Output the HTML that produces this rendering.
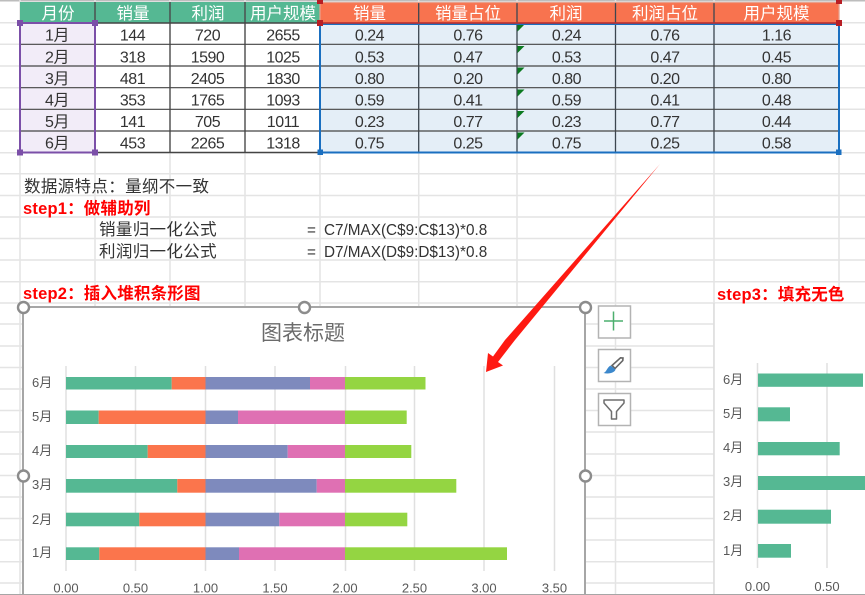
<!DOCTYPE html>
<html><head><meta charset="utf-8"><style>
html,body{margin:0;padding:0;background:#fff;width:865px;height:595px;overflow:hidden}
svg{display:block}
text{font-family:"Liberation Sans","Noto Sans CJK SC",sans-serif}
.c{text-anchor:middle;font-size:16px;letter-spacing:-.5px;fill:#333}
.h{text-anchor:middle;font-size:16.5px;fill:#fff}
.g{stroke:#e4e4e4;stroke-width:1.5;fill:none}
.t{font-size:16.5px;fill:#333;letter-spacing:.35px}
.n{font-size:15.3px;fill:#333}
.r{font-size:16.5px;fill:#f00;font-weight:bold;letter-spacing:.2px}
.l{font-size:13px;fill:#595959}
.x{font-size:13px;fill:#595959;text-anchor:middle}
.cg{stroke:#e0e0e0;stroke-width:1.5}
.d{stroke:#444;stroke-width:1.2}
.b{fill:#fff;stroke:#b3b3b3;stroke-width:1.5}
.o{fill:#fff;stroke:#8c8c8c;stroke-width:2.4}
</style></head><body>
<svg width="865" height="595" viewBox="0 0 865 595" xmlns="http://www.w3.org/2000/svg">
<rect width="865" height="595" fill="#fff"/>
<rect x="0" y="0" width="865" height="1.5" fill="#bdbdbd"/>
<path class="g" d="M0 22.7H865M0 44.3H865M0 66H865M0 87.7H865M0 109.3H865M0 131H865M0 152.7H865M0 173.7H865M0 195.5H865M0 217H865M0 238.5H865M0 260H865M0 281.7H865M0 303H865M0 324H865M0 346H865M0 367.5H865M0 389H865M0 410.5H865M0 432H865M0 454H865M0 475.5H865M0 497H865M0 518.5H865M0 540H865M0 561.7H865M0 583H865"/>
<path class="g" d="M20 0V595M95 0V595M170 0V595M245 0V595M320 0V595M418.7 0V595M517 0V595M615.5 0V595M714 0V595M839 0V303"/>

<!-- table fills -->
<rect x="20" y="2" width="300" height="20.5" fill="#55b893"/>
<rect x="320" y="2" width="519" height="21" fill="#f8734f"/>
<rect x="20" y="23" width="75" height="129" fill="#f2ecf8"/>
<rect x="95" y="23" width="225" height="129" fill="#fff"/>
<rect x="320" y="23" width="519" height="129" fill="#e4eef7"/>
<!-- table lines -->
<path d="M95 2V152M170 2V152M245 2V152" stroke="#4a4a4a" stroke-width="1.4" fill="none"/>
<path d="M418.7 2V152M517 2V152M615.5 2V152M714 2V152" stroke="#3c4650" stroke-width="1.3" fill="none"/>
<path class="d" d="M20 44.3H839M20 66H839M20 87.7H839M20 109.3H839M20 131H839"/>
<path d="M95 23H320M95 152.5H320" stroke="#444" stroke-width="1.4"/>
<!-- green triangles -->
<path fill="#0b7a20" d="M517.5 24.5h7l-7 7zM517.5 46h7l-7 7zM517.5 67.5h7l-7 7zM517.5 89.5h7l-7 7zM517.5 111h7l-7 7zM517.5 132.5h7l-7 7z"/>
<!-- selections -->
<rect x="20" y="23" width="75" height="129.5" fill="none" stroke="#7b4fa8" stroke-width="2"/>
<rect x="320" y="24" width="519" height="128.5" fill="none" stroke="#1a6fc0" stroke-width="2"/>
<rect x="320" y="2.5" width="519" height="20.5" fill="none" stroke="#e9a08c" stroke-width="1.2"/>
<path d="M320 23H839" stroke="#b8282a" stroke-width="1.5"/>
<path fill="#7b4fa8" d="M17 20h6v6h-6zM92 20h6v6h-6zM17 149.500h6v6h-6zM92 149.500h6v6h-6z"/>
<path fill="#b81e24" d="M317 0h6v4h-6zM317 20h6v6h-6zM836 0h6v4h-6zM836 20h6v6h-6z"/>
<path fill="#1a6fc0" d="M317.500 149.500h5.500v5.500h-5.500zM836 149.500h5.500v5.500h-5.500z"/>

<!-- headers -->
<text class="h" x="58" y="19">月份</text><text class="h" x="133" y="19">销量</text><text class="h" x="208" y="19">利润</text><text class="h" x="283" y="19">用户规模</text>
<text class="h" x="369.500" y="19">销量</text><text class="h" x="468" y="19">销量占位</text><text class="h" x="566" y="19">利润</text><text class="h" x="665" y="19">利润占位</text><text class="h" x="776.500" y="19">用户规模</text>

<!-- rows -->
<g>
<text class="c" x="57" y="40.500">1月</text><text class="c" x="132.500" y="40.500">144</text><text class="c" x="207.500" y="40.500">720</text><text class="c" x="283" y="40.500">2655</text><text class="c" x="369.500" y="40.500">0.24</text><text class="c" x="468" y="40.500">0.76</text><text class="c" x="566.500" y="40.500">0.24</text><text class="c" x="665" y="40.500">0.76</text><text class="c" x="776.500" y="40.500">1.16</text>
<text class="c" x="57" y="62.500">2月</text><text class="c" x="132.500" y="62.500">318</text><text class="c" x="207.500" y="62.500">1590</text><text class="c" x="283" y="62.500">1025</text><text class="c" x="369.500" y="62.500">0.53</text><text class="c" x="468" y="62.500">0.47</text><text class="c" x="566.500" y="62.500">0.53</text><text class="c" x="665" y="62.500">0.47</text><text class="c" x="776.500" y="62.500">0.45</text>
<text class="c" x="57" y="84">3月</text><text class="c" x="132.500" y="84">481</text><text class="c" x="207.500" y="84">2405</text><text class="c" x="283" y="84">1830</text><text class="c" x="369.500" y="84">0.80</text><text class="c" x="468" y="84">0.20</text><text class="c" x="566.500" y="84">0.80</text><text class="c" x="665" y="84">0.20</text><text class="c" x="776.500" y="84">0.80</text>
<text class="c" x="57" y="105.500">4月</text><text class="c" x="132.500" y="105.500">353</text><text class="c" x="207.500" y="105.500">1765</text><text class="c" x="283" y="105.500">1093</text><text class="c" x="369.500" y="105.500">0.59</text><text class="c" x="468" y="105.500">0.41</text><text class="c" x="566.500" y="105.500">0.59</text><text class="c" x="665" y="105.500">0.41</text><text class="c" x="776.500" y="105.500">0.48</text>
<text class="c" x="57" y="127">5月</text><text class="c" x="132.500" y="127">141</text><text class="c" x="207.500" y="127">705</text><text class="c" x="283" y="127">1011</text><text class="c" x="369.500" y="127">0.23</text><text class="c" x="468" y="127">0.77</text><text class="c" x="566.500" y="127">0.23</text><text class="c" x="665" y="127">0.77</text><text class="c" x="776.500" y="127">0.44</text>
<text class="c" x="57" y="148.500">6月</text><text class="c" x="132.500" y="148.500">453</text><text class="c" x="207.500" y="148.500">2265</text><text class="c" x="283" y="148.500">1318</text><text class="c" x="369.500" y="148.500">0.75</text><text class="c" x="468" y="148.500">0.25</text><text class="c" x="566.500" y="148.500">0.75</text><text class="c" x="665" y="148.500">0.25</text><text class="c" x="776.500" y="148.500">0.58</text>
</g>

<!-- notes -->
<text class="t" x="24" y="192">数据源特点：量纲不一致</text>
<text class="r" x="23" y="214">step1：做辅助列</text>
<text class="t" x="99" y="235">销量归一化公式</text>
<text class="t" x="99" y="257">利润归一化公式</text>
<text class="n" x="307" y="235">=</text>
<text class="n" x="307" y="257">=</text>
<text class="n" x="324" y="235">C7/MAX(C$9:C$13)*0.8</text>
<text class="n" x="324" y="257">D7/MAX(D$9:D$13)*0.8</text>
<text class="r" x="23" y="299">step2：插入堆积条形图</text>
<text class="r" x="717" y="300">step3：填充无色</text>

<!-- main chart -->
<rect x="23" y="307" width="562" height="288" fill="#fff" stroke="#a6a6a6" stroke-width="2"/>
<text x="303" y="340" text-anchor="middle" style="font-size:21px;fill:#6b6b6b">图表标题</text>
<path class="cg" d="M66 366V571M135.500 366V571M205.500 366V571M275 366V571M345.500 366V571M414.500 366V571M484 366V571M554.500 366V571"/>
<g>
<rect x="66" y="377" width="105.700" height="12.500" fill="#55b893"/><rect x="171.700" y="377" width="33.800" height="12.500" fill="#fb754c"/><rect x="205.500" y="377" width="104.500" height="12.500" fill="#7e8abd"/><rect x="310" y="377" width="35" height="12.500" fill="#df70b3"/><rect x="345" y="377" width="80.500" height="12.500" fill="#94d542"/>
<rect x="66" y="410.500" width="32.700" height="13.500" fill="#55b893"/><rect x="98.700" y="410.500" width="106.800" height="13.500" fill="#fb754c"/><rect x="205.500" y="410.500" width="32.500" height="13.500" fill="#7e8abd"/><rect x="238" y="410.500" width="107" height="13.500" fill="#df70b3"/><rect x="345" y="410.500" width="61.700" height="13.500" fill="#94d542"/>
<rect x="66" y="445" width="81.700" height="13" fill="#55b893"/><rect x="147.700" y="445" width="57.800" height="13" fill="#fb754c"/><rect x="205.500" y="445" width="82.200" height="13" fill="#7e8abd"/><rect x="287.700" y="445" width="57.300" height="13" fill="#df70b3"/><rect x="345" y="445" width="66.300" height="13" fill="#94d542"/>
<rect x="66" y="479" width="111.300" height="13.700" fill="#55b893"/><rect x="177.300" y="479" width="28.200" height="13.700" fill="#fb754c"/><rect x="205.500" y="479" width="111.200" height="13.700" fill="#7e8abd"/><rect x="316.700" y="479" width="28.300" height="13.700" fill="#df70b3"/><rect x="345" y="479" width="111.300" height="13.700" fill="#94d542"/>
<rect x="66" y="512.700" width="73.300" height="13.600" fill="#55b893"/><rect x="139.300" y="512.700" width="66.200" height="13.600" fill="#fb754c"/><rect x="205.500" y="512.700" width="73.800" height="13.600" fill="#7e8abd"/><rect x="279.300" y="512.700" width="65.700" height="13.600" fill="#df70b3"/><rect x="345" y="512.700" width="62.300" height="13.600" fill="#94d542"/>
<rect x="66" y="547.300" width="33.300" height="12.700" fill="#55b893"/><rect x="99.300" y="547.300" width="106.200" height="12.700" fill="#fb754c"/><rect x="205.500" y="547.300" width="33.500" height="12.700" fill="#7e8abd"/><rect x="239" y="547.300" width="106" height="12.700" fill="#df70b3"/><rect x="345" y="547.300" width="162" height="12.700" fill="#94d542"/>
</g>
<text class="l" x="32" y="387">6月</text><text class="l" x="32" y="421">5月</text><text class="l" x="32" y="455">4月</text><text class="l" x="32" y="489">3月</text><text class="l" x="32" y="524">2月</text><text class="l" x="32" y="557">1月</text>
<text class="x" x="66" y="592.500">0.00</text><text class="x" x="135.500" y="592.500">0.50</text><text class="x" x="205.500" y="592.500">1.00</text><text class="x" x="275" y="592.500">1.50</text><text class="x" x="345" y="592.500">2.00</text><text class="x" x="414.500" y="592.500">2.50</text><text class="x" x="484" y="592.500">3.00</text><text class="x" x="554.500" y="592.500">3.50</text>
<circle class="o" cx="23.500" cy="307.500" r="5.500"/><circle class="o" cx="304.500" cy="307.500" r="5.500"/><circle class="o" cx="585.500" cy="307.500" r="5.500"/><circle class="o" cx="23.500" cy="476" r="5.500"/><circle class="o" cx="585.500" cy="476" r="5.500"/>

<!-- side buttons -->
<rect class="b" x="598.500" y="306" width="32" height="32"/>
<path d="M604 321H623M613.500 311.500V330.500" stroke="#4caf6e" stroke-width="1.500" fill="none"/>
<rect class="b" x="598.500" y="349.500" width="32" height="32"/>
<path d="M612 365.500L620.500 357.800L623 358L622.800 360.500L615 368.500Z" fill="#fff" stroke="#666" stroke-width="1.600"/>
<path d="M603.500 373C606.500 372 607 367.500 610.500 365.500L615.500 369.500C615 372 610 374.500 603.500 373Z" fill="#3c88cc"/>
<rect class="b" x="598.500" y="393.500" width="32" height="32"/>
<path d="M604 400H624V403L616.500 411.500V419H611.500V411.500L604 403Z" fill="#fff" stroke="#6e6e6e" stroke-width="1.500" stroke-linejoin="round"/>

<!-- right chart -->
<rect x="714" y="303.500" width="151" height="292" fill="#fff"/>
<path d="M714 303V595" stroke="#dcdcdc" stroke-width="1.500"/>
<path class="cg" d="M757.500 363V568M827 363V568"/>
<g fill="#55b893">
<rect x="758" y="373.500" width="105" height="13.300"/><rect x="758" y="407.300" width="32" height="14"/><rect x="758" y="442" width="81.700" height="13.300"/><rect x="758" y="476" width="107" height="14"/><rect x="758" y="509.700" width="73" height="14"/><rect x="758" y="544" width="33" height="13.700"/>
</g>
<text class="l" x="723" y="384">6月</text><text class="l" x="723" y="418">5月</text><text class="l" x="723" y="452">4月</text><text class="l" x="723" y="486">3月</text><text class="l" x="723" y="520">2月</text><text class="l" x="723" y="555">1月</text>
<text class="x" x="757.500" y="591">0.00</text><text class="x" x="827" y="591">0.50</text>

<!-- bottom edge -->
<rect x="0" y="594" width="865" height="1" fill="#a6a6a6"/>

<!-- arrow -->
<polygon fill="#fe1a12" points="660,164 515,340 498,362 503,365.500 486,372 488,353 493,356.500 505,340"/>
</svg>
</body></html>
